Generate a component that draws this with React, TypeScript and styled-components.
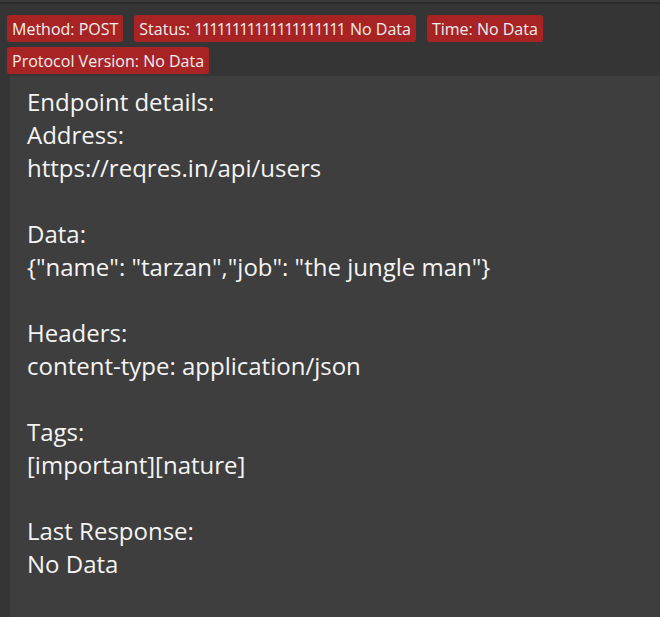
import styled, { createGlobalStyle } from "styled-components";

const GlobalStyle = createGlobalStyle`
  html, body {
    margin: 0;
    padding: 0;
    background: #353535;
    height: 100%;
  }
  #root {
    height: 100%;
  }
`;

const badges = [
  { rotulo: "Method: POST" },
  { rotulo: "Status: ", codigo: "11111111111111111111", resto: " No Data" },
  { rotulo: "Time: No Data" },
  { rotulo: "Protocol Version: No Data" },
];

const details = [
  { titulo: "Endpoint details:", linhas: [] as string[] },
  { titulo: "Address:", linhas: ["https://reqres.in/api/users"] },
  { titulo: "Data:", linhas: ['{"name": "tarzan","job": "the jungle man"}'] },
  { titulo: "Headers:", linhas: ["content-type: application/json"] },
  { titulo: "Tags:", linhas: ["[important][nature]"] },
  { titulo: "Last Response:", linhas: ["No Data"] },
];

export default function App() {
  return (
    <>
      <GlobalStyle />
      <Page>
        <TopLine />
        <BadgeBar>
          {badges.map((item, index) => (
            <Badge key={index}>
              {item.rotulo}
              {item.codigo && <Codigo>{item.codigo}</Codigo>}
              {item.resto}
            </Badge>
          ))}
        </BadgeBar>
        <Painel>
          {details.map((item, index) => (
            <Bloco key={index} espaco={index > 1}>
              <Linha>{item.titulo}</Linha>
              {item.linhas.map((linha, i) => (
                <Linha key={i}>{linha}</Linha>
              ))}
            </Bloco>
          ))}
        </Painel>
      </Page>
    </>
  );
}

const Page = styled.div`
  height: 100%;
  display: flex;
  flex-direction: column;
  background: #353535;
  font-family: "Open Sans", "Noto Sans", sans-serif;
  overflow: hidden;
`;

const TopLine = styled.div`
  height: 2px;
  background: #3a3a3a;
  border-bottom: 2px solid #2b2b2b;
`;

const BadgeBar = styled.div`
  display: flex;
  flex-wrap: wrap;
  gap: 5px 11px;
  padding: 11px 10px 2px 7px;
`;

const Badge = styled.span`
  display: inline-flex;
  align-items: center;
  height: 27px;
  padding: 0 5px;
  border-radius: 3px;
  background: #a82424;
  color: #efefef;
  font-size: 16px;
  white-space: pre;
`;

const Codigo = styled.span`
  letter-spacing: -1.65px;
  margin-right: 1.65px;
`;

const Painel = styled.div`
  flex: 1;
  margin-left: 10px;
  padding: 9px 17px;
  background: #3e3e3e;
  color: #f4f4f4;
  font-size: 24px;
`;

const Bloco = styled.div<{ espaco: boolean }>`
  margin-top: ${(props) => (props.espaco ? "33px" : "0")};
`;

const Linha = styled.div`
  height: 33px;
  line-height: 33px;
  white-space: nowrap;
`;
